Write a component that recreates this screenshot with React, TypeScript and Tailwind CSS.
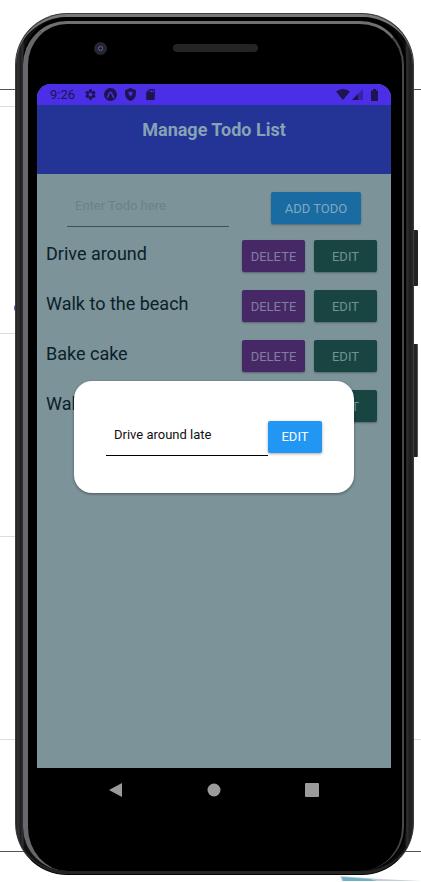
import { useState } from "react";
import { MdSettings, MdSdCard } from "react-icons/md";

const todos = ["Drive around", "Walk to the beach", "Bake cake", "Walk the dog"];

function ExpoIcon() {
  return (
    <svg viewBox="0 0 24 24" className="size-[13px]" aria-hidden="true">
      <circle cx="12" cy="12" r="12" fill="currentColor" />
      <path
        d="M6.500 17c2-3 3-9 5.500-9s3.500 6 5.500 9"
        fill="none"
        stroke="#4a2fe6"
        strokeWidth="2.800"
        strokeLinecap="round"
      />
    </svg>
  );
}

function ShieldIcon() {
  return (
    <svg viewBox="0 0 24 24" className="size-[13px]" aria-hidden="true">
      <path d="M12 0 22 4v7c0 6-4 11-10 13C6 22 2 17 2 11V4z" fill="currentColor" />
      <path d="M8 7h8l-1 5-3 4-3-4z" fill="#4a2fe6" />
    </svg>
  );
}

function StatusBar() {
  return (
    <div className="flex h-[21px] items-center justify-between bg-[#4a2fe6] px-[13px] text-[#20134f]">
      <div className="flex items-center gap-[7px]">
        <span className="w-[27px] text-[13px] leading-4">9:26</span>
        <MdSettings className="size-[13px]" />
        <ExpoIcon />
        <ShieldIcon />
        <MdSdCard className="size-[13px]" />
      </div>
      <div className="flex items-center gap-[2px]">
        <svg viewBox="0 0 14 11" className="h-[11px] w-[14px]" aria-hidden="true">
          <path d="M0 2.500Q7-2.500 14 2.500L7 11z" fill="currentColor" />
        </svg>
        <svg viewBox="0 0 11 11" className="size-[11px]" aria-hidden="true">
          <path d="M0 11 11 0v11z" fill="currentColor" opacity="0.45" />
          <path d="M0 11 6 5v6z" fill="currentColor" />
        </svg>
        <svg viewBox="0 0 13 12" className="h-3 w-[13px]" aria-hidden="true">
          <path d="M6 1.500h2V0h3v1.500h2V12H6z" fill="currentColor" />
        </svg>
      </div>
    </div>
  );
}

function TodoRow({ text }: { text: string }) {
  return (
    <li className="flex h-8 items-center justify-between">
      <span className="pb-1 text-[18px] leading-6 text-[#0a2129]">{text}</span>
      <span className="flex gap-[9px]">
        <button
          type="button"
          className="h-8 w-[63px] rounded-[2px] bg-[#472866] pt-px text-[13px] text-[#7f7f9f] shadow-[0_1px_2px_rgba(0,0,0,0.3)]"
        >
          DELETE
        </button>
        <button
          type="button"
          className="h-8 w-[63px] rounded-[2px] bg-[#184541] pt-px text-[13px] text-[#6f938f] shadow-[0_1px_2px_rgba(0,0,0,0.3)]"
        >
          EDIT
        </button>
      </span>
    </li>
  );
}

function EditDialog() {
  const [value, setValue] = useState("Drive around late");
  return (
    <div className="absolute inset-0 flex items-center px-[37px]">
      <div
        role="dialog"
        aria-label="Edit todo"
        className="flex h-28 w-full items-center justify-center rounded-[18px] bg-white shadow-[0_1px_3px_rgba(0,0,0,0.4)]"
      >
        <input
          aria-label="Todo"
          value={value}
          onChange={(e) => setValue(e.target.value)}
          className="h-[38px] w-[162px] border-b border-black px-2 pb-[3px] text-[13px] text-[#111] outline-none"
        />
        <button
          type="button"
          className="h-8 w-[54px] rounded-[2px] bg-[#2196f3] pt-px text-[13px] text-white shadow-[0_1px_3px_rgba(0,0,0,0.35)]"
        >
          EDIT
        </button>
      </div>
    </div>
  );
}

function NavBar() {
  return (
    <nav className="mr-[11px] ml-[9px] flex h-[103px] items-start justify-center gap-[84px] pt-[15px] text-[#9b9b9b]">
      <button type="button" aria-label="Back">
        <svg viewBox="0 0 14 14" className="size-[14px]" aria-hidden="true">
          <path d="M0 7 13 0v14z" fill="currentColor" />
        </svg>
      </button>
      <button type="button" aria-label="Home">
        <svg viewBox="0 0 14 14" className="size-[14px]" aria-hidden="true">
          <circle cx="7" cy="7" r="6.500" fill="currentColor" />
        </svg>
      </button>
      <button type="button" aria-label="Recents">
        <svg viewBox="0 0 14 14" className="size-[14px]" aria-hidden="true">
          <rect width="14" height="14" rx="1" fill="currentColor" />
        </svg>
      </button>
    </nav>
  );
}

function Backdrop() {
  return (
    <div className="absolute inset-0 overflow-hidden" aria-hidden="true">
      <div className="absolute top-[89px] h-px w-full bg-[#555]" />
      <div className="absolute top-[106px] h-px w-10 bg-[#ddd]" />
      <div className="absolute top-[308px] left-[14px] size-2 -translate-y-1/2 rounded-full bg-[#3f51c5]" />
      <div className="absolute top-[333px] h-px w-10 bg-[#ddd]" />
      <div className="absolute top-[536px] h-px w-10 bg-[#ddd]" />
      <div className="absolute top-[739px] h-px w-full bg-[#ddd]" />
      <div className="absolute top-[851px] h-px w-full bg-[#555]" />
      <div className="absolute top-[230px] right-[3px] h-14 w-3 rounded-[1px] bg-[#242424]" />
      <div className="absolute top-[344px] right-[3px] h-[113px] w-3 rounded-[1px] border-r border-[#555] bg-[#242424]" />
      <svg viewBox="0 0 81 5" className="absolute right-0 bottom-0 h-[5px] w-[81px]">
        <path d="M0 0 40 3 81 5H2z" fill="#c3ced2" />
        <path d="M2 1 30 3 36 5H3z" fill="#6fb0c4" />
      </svg>
    </div>
  );
}

export default function App() {
  return (
    <div className="relative bg-white pt-[13px] pr-[7px] pb-[6px] pl-[15px] font-[Roboto,sans-serif]">
      <Backdrop />
      <div className="relative rounded-[52px] border border-[#3c3c3c] border-b-[#050505] bg-[linear-gradient(90deg,#252525_0,#343437_3px,#1b1c1e_4px,#303134_7px,#111_8px,#111_50%,#0a0a0a_calc(100%-8px),#303030_calc(100%-6px),#1d1d1d_calc(100%-3px),#2a2a2a_100%)]">
        <div className="rounded-[51px] border-t-[3px] border-b-[3px] border-t-[#77787a] border-b-[#242424] px-[7px]">
          <div className="rounded-[44px] bg-black pt-1 pr-[2px] pl-0">
            <div className="rounded-[44px] border-t-[3px] border-r-2 border-l-[5px] border-t-[#6f7072] border-r-[#484848] border-l-[#67686c] bg-black">
              <div className="grid h-[60px] grid-cols-[1fr_85px_1fr] items-center justify-items-center pb-3">
                <span className="flex size-[13px] items-center justify-center rounded-full bg-[#25262f]">
                  <span className="size-[5px] rounded-full border border-[#5f6a9a] bg-[#15183a]" />
                </span>
                <span className="h-2 w-full rounded-full bg-[#242424]" />
              </div>
              <div className="mr-[11px] ml-[9px] overflow-hidden rounded-t-[14px] bg-[#7b9399]">
                <StatusBar />
                <main className="relative">
                  <header className="h-[69px] bg-[#243396] pt-[13px] text-center">
                    <h1 className="text-[18px] leading-6 font-bold text-[#86a3b4]">
                      Manage Todo List
                    </h1>
                  </header>
                  <div className="flex min-h-[594px] flex-col pt-[18px]">
                    <form
                      className="flex items-start justify-between px-[30px]"
                      onSubmit={(e) => e.preventDefault()}
                    >
                      <input
                        aria-label="New todo"
                        placeholder="Enter Todo here"
                        className="h-[35px] w-[162px] border-b border-[#3c5057] px-2 pb-[7px] text-[13px] text-[#0a2129] outline-none placeholder:text-[#6b8289]"
                      />
                      <button
                        type="submit"
                        className="h-8 w-[90px] rounded-[2px] bg-[#196ba1] pt-px text-[13px] text-[#7fa9c2] shadow-[0_1px_2px_rgba(0,0,0,0.3)]"
                      >
                        ADD TODO
                      </button>
                    </form>
                    <ul className="flex flex-col gap-[18px] pt-[13px] pr-[14px] pl-[9px]">
                      {todos.map((todo) => (
                        <TodoRow key={todo} text={todo} />
                      ))}
                    </ul>
                  </div>
                  <EditDialog />
                </main>
              </div>
              <NavBar />
            </div>
          </div>
        </div>
      </div>
    </div>
  );
}
